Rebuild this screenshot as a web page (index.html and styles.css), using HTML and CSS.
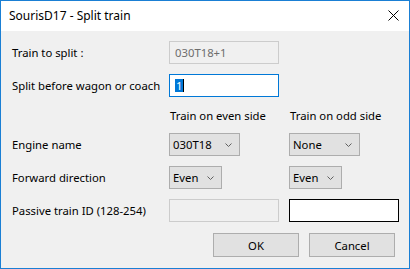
FILE: index.html
```html
<!DOCTYPE html>
<html>
<head>
<meta charset="utf-8">
<link rel="stylesheet" href="styles.css">
</head>
<body>
<div class="window">
  <div class="titlebar">
    <span class="title">SourisD17 - Split train</span>
    <svg class="close" width="11" height="11" viewBox="0 0 11 11"><path d="M0.5 0.5 L10.5 10.5 M10.5 0.5 L0.5 10.5" stroke="#000" stroke-width="1"/></svg>
  </div>
  <div class="content">
    <div class="label">Train to split :</div>
    <div class="field disabled">030T18+1</div>
    <div></div>

    <div class="label">Split before wagon or coach</div>
    <div class="field focused"><span class="sel">1</span><span class="caret"></span></div>
    <div></div>

    <div></div>
    <div class="head">Train on even side</div>
    <div class="head">Train on odd side</div>

    <div class="label">Engine name</div>
    <div class="combo wide"><span>030T18</span><svg width="7" height="4" viewBox="0 0 7 4"><polyline points="0.5,0.5 3.5,3.5 6.5,0.5" fill="none" stroke="#606060" stroke-width="1"/></svg></div>
    <div class="combo wide"><span>None</span><svg width="7" height="4" viewBox="0 0 7 4"><polyline points="0.5,0.5 3.5,3.5 6.5,0.5" fill="none" stroke="#606060" stroke-width="1"/></svg></div>

    <div class="label">Forward direction</div>
    <div class="combo narrow"><span>Even</span><svg width="7" height="4" viewBox="0 0 7 4"><polyline points="0.5,0.5 3.5,3.5 6.5,0.5" fill="none" stroke="#606060" stroke-width="1"/></svg></div>
    <div class="combo narrow"><span>Even</span><svg width="7" height="4" viewBox="0 0 7 4"><polyline points="0.5,0.5 3.5,3.5 6.5,0.5" fill="none" stroke="#606060" stroke-width="1"/></svg></div>

    <div class="label">Passive train ID (128-254)</div>
    <div class="field disabled"></div>
    <div class="field active"></div>
  </div>
  <div class="buttons">
    <div class="btn">OK</div>
    <div class="btn">Cancel</div>
  </div>
</div>
</body>
</html>
```
FILE: styles.css
```css
html, body {
  margin: 0;
  padding: 0;
}
body {
  width: 410px;
  height: 269px;
  overflow: hidden;
  font-family: "Noto Sans", "DejaVu Sans", sans-serif;
  font-size: 11.3px;
  color: #000;
}
.window {
  box-sizing: border-box;
  width: 410px;
  height: 269px;
  border: 1px solid #1a7fd4;
  background: #f0f0f0;
  display: flex;
  flex-direction: column;
}
.titlebar {
  height: 30px;
  background: #fff;
  display: flex;
  align-items: center;
  justify-content: space-between;
  padding: 0 10px 0 8px;
  flex: none;
}
.title {
  font-size: 12px;
  margin-top: -1px;
}
.close {
  margin-top: -1px;
}
.content {
  display: grid;
  grid-template-columns: 147px 110px 110px;
  column-gap: 10px;
  grid-template-rows: 23px 23px 16px 23px 23px 23px;
  row-gap: 10px;
  padding: 10px 0 0 11px;
}
.label {
  display: flex;
  align-items: center;
  white-space: nowrap;
}
.head {
  display: flex;
  align-items: center;
  white-space: nowrap;
  padding-left: 1px;
}
.field {
  box-sizing: border-box;
  height: 23px;
  border: 1px solid #7a7a7a;
  background: #fff;
  display: flex;
  align-items: center;
  padding-left: 5px;
}
.field.disabled {
  border-color: #cccccc;
  background: #f0f0f0;
  color: #6d6d6d;
}
.field.focused {
  border-color: #0078d7;
}
.field.active {
  border-color: #000;
}
.sel {
  background: #0078d7;
  color: #fff;
  line-height: 13px;
  padding: 0 1px;
}
.caret {
  width: 1px;
  height: 13px;
  background: #000;
}
.combo {
  box-sizing: border-box;
  height: 23px;
  border: 1px solid #adadad;
  background: #e1e1e1;
  display: flex;
  align-items: center;
  justify-content: space-between;
  padding: 0 7px 0 3px;
}
.combo.wide { width: 71px; }
.combo.narrow { width: 53px; }
.buttons {
  display: flex;
  justify-content: flex-end;
  gap: 10px;
  padding: 11px 14px 0 0;
}
.btn {
  box-sizing: border-box;
  width: 86px;
  height: 24px;
  border: 1px solid #adadad;
  background: #e1e1e1;
  display: flex;
  align-items: center;
  justify-content: center;
}
```
